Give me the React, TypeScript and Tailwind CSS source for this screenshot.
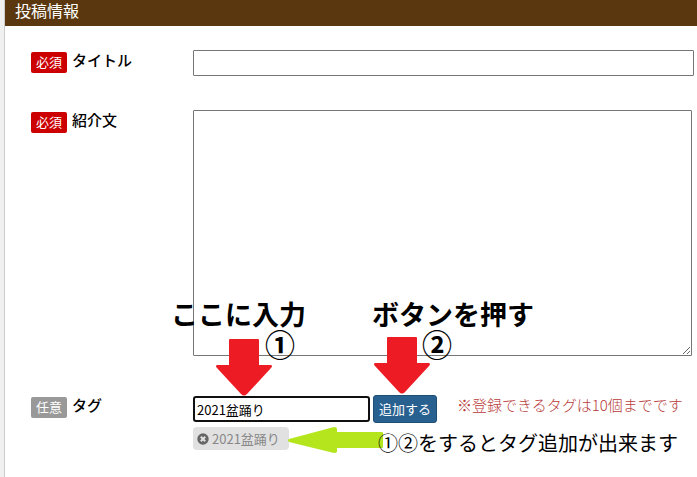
import type { ReactNode } from 'react';

type BadgeKind = 'required' | 'optional';

const badgeStyles: Record<BadgeKind, string> = {
  required: 'bg-[#cc0000]',
  optional: 'bg-[#999999]',
};

export default function App() {
  return (
    <div className="min-h-screen bg-[#f0f0f0] pl-1 font-['Noto_Sans_CJK_JP',sans-serif] text-black">
      <main className="min-h-screen border-l border-[#cccccc] bg-white">
        <h1 className="h-[26px] bg-[#5a370e] pl-[10px] text-[16px] leading-[20px] text-white">
          投稿情報
        </h1>

        <form className="flex flex-col gap-[34px] pt-6 pl-[26px]" onSubmit={(e) => e.preventDefault()}>
          <FormRow id="title" kind="required" label="タイトル">
            <input
              id="title"
              type="text"
              className="mr-[3px] h-[26px] min-w-0 flex-1 rounded-[1px] border border-[#767676] px-1 text-[13px] outline-none"
            />
          </FormRow>

          <FormRow id="description" kind="required" label="紹介文">
            <textarea
              id="description"
              className="mr-[5px] mb-[5px] h-[246px] min-w-0 flex-1 resize rounded-[1px] border border-[#767676] p-1 text-[13px] outline-none"
            />
          </FormRow>

          <FormRow id="tag" kind="optional" label="タグ">
            <div className="relative min-w-0 flex-1">
              <div className="flex items-center">
                <input
                  id="tag"
                  type="text"
                  defaultValue="2021盆踊り"
                  className="mr-[3px] h-[26px] w-[177px] rounded-[3px] border-2 border-[#101010] px-[2px] text-[13px] outline-none"
                />
                <button
                  type="button"
                  className="h-7 rounded-[3px] border border-[#204d74] bg-[#286090] px-[5px] text-[13px] leading-[20px] whitespace-nowrap text-white"
                >
                  追加する
                </button>
                <p className="-mt-2 ml-5 text-[15px] leading-[20px] font-light whitespace-nowrap text-[#b83a3a]">
                  ※登録できるタグは10個までです
                </p>
              </div>
              <TagChip name="2021盆踊り" />

              <Annotation className="-top-[97px] -left-[22px]" text="ここに入力" />
              <StepNumber className="-top-[68px] left-[72px]" text="①" />
              <DownArrow className="-top-14 left-[23px]" />

              <Annotation className="-top-[97px] left-[179px]" text="ボタンを押す" />
              <StepNumber className="-top-[68px] left-[229px]" text="②" />
              <DownArrow className="-top-[58px] left-[181px]" />

              <LeftArrow className="top-8 left-[95px]" />
              <p className="absolute top-[34px] left-[185px] text-[20px] leading-[28px] whitespace-nowrap">
                ①②をするとタグ追加が出来ます
              </p>
            </div>
          </FormRow>
        </form>
      </main>
    </div>
  );
}

function FormRow({
  id,
  kind,
  label,
  children,
}: {
  id: string;
  kind: BadgeKind;
  label: string;
  children: ReactNode;
}) {
  return (
    <div className="flex items-start">
      <label htmlFor={id} className="flex w-[162px] shrink-0 items-start gap-[5px]">
        <span
          className={`mt-[2px] h-[21px] w-9 rounded-[2px] text-center text-[13px] leading-[20px] text-white ${badgeStyles[kind]}`}
        >
          {kind === 'required' ? '必須' : '任意'}
        </span>
        <span className="text-[15px] leading-[20px] font-medium">{label}</span>
      </label>
      {children}
    </div>
  );
}

function TagChip({ name }: { name: string }) {
  return (
    <button
      type="button"
      className="mt-1 flex h-[23px] w-24 items-center gap-[3px] rounded-[4px] bg-[#e1e1e1] pl-1 text-[13px] leading-[20px] whitespace-nowrap text-[#888888]"
    >
      <svg viewBox="0 0 12 12" className="h-3 w-3 shrink-0" aria-hidden="true">
        <circle cx="6" cy="6" r="5.7" fill="#666666" />
        <path d="M3.8 3.8 8.2 8.2M8.2 3.8 3.8 8.2" stroke="#e1e1e1" strokeWidth="2" />
      </svg>
      {name}
    </button>
  );
}

function Annotation({ className, text }: { className: string; text: string }) {
  return (
    <p className={`absolute text-[27px] leading-[32px] font-bold whitespace-nowrap ${className}`}>
      {text}
    </p>
  );
}

function StepNumber({ className, text }: { className: string; text: string }) {
  return (
    <span className={`absolute text-[30px] leading-[32px] font-bold ${className}`}>{text}</span>
  );
}

function DownArrow({ className }: { className: string }) {
  return (
    <svg viewBox="0 0 56 57" className={`absolute h-[57px] w-14 ${className}`} aria-hidden="true">
      <path
        d="M14 0H42Q43 0 43 1V26H55Q57 27 55 29L31 55Q28 58 25 55L1 29Q-1 27 1 26H13V1Q13 0 14 0Z"
        fill="#ed1c24"
      />
    </svg>
  );
}

function LeftArrow({ className }: { className: string }) {
  return (
    <svg viewBox="0 0 95 26" className={`absolute h-[26px] w-[95px] ${className}`} aria-hidden="true">
      <path
        d="M1 12 46 0Q49 0 49 2V5H94Q95 5 95 6V20Q95 21 94 21H49V25Q48 26 46 26L1 15Q-1 13 1 12Z"
        fill="#b5e61d"
      />
    </svg>
  );
}
